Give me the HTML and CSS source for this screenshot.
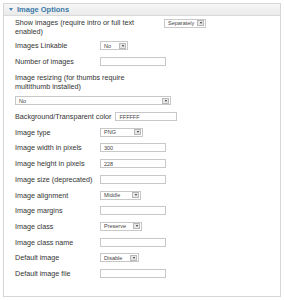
FILE: index.html
```html
<!DOCTYPE html>
<html>
<head>
<meta charset="utf-8">
<link rel="stylesheet" href="styles.css">
</head>
<body>
<div class="panel">
  <div class="head"><span class="tri"></span><span class="title">Image Options</span></div>
  <div class="body">
    <div class="row two">
      <div class="lbl wide">Show images (require intro or full text enabled)</div>
      <span class="sel w42"><span class="val">Separately</span><span class="btn"></span></span>
    </div>
    <div class="row">
      <div class="lbl">Images Linkable</div>
      <span class="sel w28"><span class="val">No</span><span class="btn"></span></span>
    </div>
    <div class="row">
      <div class="lbl">Number of images</div>
      <span class="inp w66"></span>
    </div>
    <div class="row two resize-row">
      <div class="lbl resize">Image resizing (for thumbs require multithumb installed)</div>
    </div>
    <div class="row">
      <span class="sel wfull"><span class="val">No</span><span class="btn"></span></span>
    </div>
    <div class="row">
      <div class="lbl auto">Background/Transparent color</div>
      <span class="inp w62"><span class="val">FFFFFF</span></span>
    </div>
    <div class="row">
      <div class="lbl">Image type</div>
      <span class="sel w43"><span class="val">PNG</span><span class="btn"></span></span>
    </div>
    <div class="row">
      <div class="lbl">Image width in pixels</div>
      <span class="inp w66"><span class="val">300</span></span>
    </div>
    <div class="row">
      <div class="lbl">Image height in pixels</div>
      <span class="inp w66"><span class="val">228</span></span>
    </div>
    <div class="row">
      <div class="lbl">Image size (deprecated)</div>
      <span class="inp w66"></span>
    </div>
    <div class="row">
      <div class="lbl">Image alignment</div>
      <span class="sel w40"><span class="val">Middle</span><span class="btn"></span></span>
    </div>
    <div class="row">
      <div class="lbl">Image margins</div>
      <span class="inp w66"></span>
    </div>
    <div class="row">
      <div class="lbl">Image class</div>
      <span class="sel w42"><span class="val">Preserve</span><span class="btn"></span></span>
    </div>
    <div class="row">
      <div class="lbl">Image class name</div>
      <span class="inp w66"></span>
    </div>
    <div class="row">
      <div class="lbl">Default image</div>
      <span class="sel w39"><span class="val">Disable</span><span class="btn"></span></span>
    </div>
    <div class="row">
      <div class="lbl">Default image file</div>
      <span class="inp w66"></span>
    </div>
  </div>
</div>
</body>
</html>
```
FILE: styles.css
```css
html, body {
  margin: 0;
  padding: 0;
  background: #ffffff;
}
body {
  font-family: "Liberation Sans", Arial, sans-serif;
  font-size: 7.2px;
  color: #333333;
  padding: 3px;
}
.panel {
  border: 1px solid #d6d6d6;
  height: 294px;
  box-sizing: border-box;
  background: #ffffff;
}
.head {
  height: 11px;
  background: linear-gradient(#f6f6f6, #ebebeb);
  border-bottom: 1px solid #dadada;
  display: flex;
  align-items: center;
  padding-left: 5px;
}
.tri {
  width: 0;
  height: 0;
  border-left: 2.5px solid transparent;
  border-right: 2.5px solid transparent;
  border-top: 3px solid #4a86b4;
  margin-right: 4px;
}
.title {
  font-weight: bold;
  color: #3a79a8;
  font-size: 7.5px;
}
.body {
  padding: 0 0 0 11px;
}
.row {
  display: flex;
  align-items: center;
  height: 15.7px;
}
.row.two {
  align-items: flex-start;
  height: auto;
  padding: 2px 0 2px 0;
}
.row.two .sel {
  margin-top: 0.5px;
}
.row.resize-row {
  padding: 4.1px 0 1.6px 0;
}
.lbl {
  width: 85px;
  flex: none;
  line-height: 9px;
  white-space: nowrap;
}
.lbl.wide {
  width: 149px;
  box-sizing: border-box;
  padding-right: 24px;
  white-space: normal;
}
.lbl.resize {
  width: 125px;
  white-space: normal;
}
.lbl.auto {
  width: auto;
  margin-right: 4px;
}
.sel, .inp {
  display: flex;
  align-items: center;
  height: 9px;
  box-sizing: border-box;
  border: 1px solid #c8c8c8;
  background: #fff;
  font-size: 5.5px;
  color: #444;
}
.sel .val, .inp .val {
  flex: 1;
  padding-left: 3px;
  white-space: nowrap;
  overflow: hidden;
}
.btn {
  width: 7px;
  height: 6px;
  margin-right: 1px;
  background: #e6e6e6;
  border: 1px solid #b8b8b8;
  box-sizing: border-box;
  display: flex;
  align-items: center;
  justify-content: center;
}
.btn::after {
  content: "";
  border-left: 1.5px solid transparent;
  border-right: 1.5px solid transparent;
  border-top: 2px solid #333;
}
.w28 { width: 28px; }
.w39 { width: 39px; }
.w40 { width: 41px; }
.w42 { width: 42px; }
.w43 { width: 43px; }
.w62 { width: 62px; }
.w66 { width: 66px; }
.wfull { width: 156px; }
```
